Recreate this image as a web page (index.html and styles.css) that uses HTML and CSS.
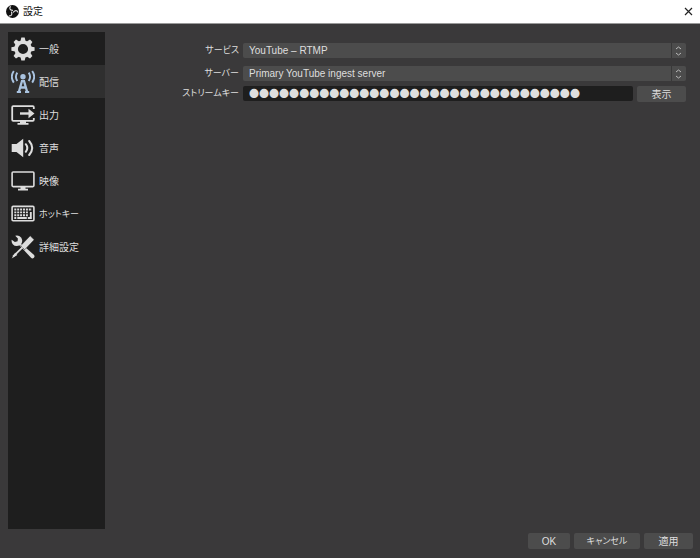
FILE: index.html
```html
<!DOCTYPE html>
<html lang="ja">

<head>
  <meta charset="UTF-8">
  <title>設定</title>
  <link rel="stylesheet" href="styles.css">
</head>

<body>
  <header class="titlebar">
    <svg class="logo" viewBox="0 0 24 24" aria-hidden="true">
      <circle cx="12" cy="12" r="12" fill="#111" />
      <g fill="none" stroke="#ddd" stroke-width="2.2" stroke-linecap="round">
        <path id="blade" d="M12 10C7 9 6 6 8 3" />
        <use href="#blade" transform="rotate(120 12 12)" />
        <use href="#blade" transform="rotate(240 12 12)" />
      </g>
    </svg>
    <h1>設定</h1>
    <button class="close" type="button" aria-label="閉じる">
      <svg viewBox="0 0 9 9"><path d="M1 1l7 7M8 1l-7 7" stroke="#222" stroke-width="1.2" /></svg>
    </button>
  </header>

  <div class="main">
    <nav class="sidebar">
      <a href="#general">
        <svg viewBox="0 0 24 24">
          <circle cx="12" cy="12" r="6.9" fill="none" stroke="#ddd" stroke-width="3.6" />
          <g fill="#ddd">
            <path id="tooth" d="M9.4 4.5L10.3.4h3.4l.9 4.1z" />
            <use href="#tooth" transform="rotate(45 12 12)" />
            <use href="#tooth" transform="rotate(90 12 12)" />
            <use href="#tooth" transform="rotate(135 12 12)" />
            <use href="#tooth" transform="rotate(180 12 12)" />
            <use href="#tooth" transform="rotate(225 12 12)" />
            <use href="#tooth" transform="rotate(270 12 12)" />
            <use href="#tooth" transform="rotate(315 12 12)" />
          </g>
        </svg>
        <span>一般</span>
      </a>
      <a href="#stream" class="active">
        <svg viewBox="0 0 24 24" fill="none" stroke="#a9c3e0">
          <circle cx="12" cy="6.8" r="2.7" fill="#a9c3e0" stroke="none" />
          <path d="M6.3 2.6Q3.5 6.8 6.3 11M17.7 2.6Q20.5 6.8 17.7 11M2.8 1Q-1.2 6.8 2.8 12.6M21.2 1Q25.2 6.8 21.2 12.6" stroke-width="1.9" />
          <path d="M11 11L7.8 22M13 11L16.2 22M9 17.5h6" stroke-width="2.3" />
          <path d="M10 11h4M5.8 22h4.2M14 22h4.2" stroke-width="2" />
        </svg>
        <span>配信</span>
      </a>
      <a href="#output">
        <svg viewBox="0 0 24 24" fill="none" stroke="#ddd">
          <path d="M22.8 6V4.2q0-1-1-1H2.2q-1 0-1 1v12.6q0 1 1 1h19.6q1 0 1-1V15" stroke-width="1.8" />
          <path d="M9 10.5h10" stroke-width="2.4" />
          <path d="M17.5 5.8l6 4.7-6 4.7z M9 18h6v2h2.5v1.8h-11V20H9z" fill="#ddd" stroke="none" />
        </svg>
        <span>出力</span>
      </a>
      <a href="#audio">
        <svg viewBox="0 0 24 24">
          <path d="M.7 8h4.8l6.7-5.3v18.6L5.5 16H.7z" fill="#ddd" />
          <path d="M14.8 8.2q3 3.8 0 7.6M18.2 5q6 7 0 14" fill="none" stroke="#ddd" stroke-width="2" stroke-linecap="round" />
        </svg>
        <span>音声</span>
      </a>
      <a href="#video">
        <svg viewBox="0 0 24 24">
          <rect x="1.1" y="3" width="21.8" height="14.6" rx="1" fill="none" stroke="#ddd" stroke-width="1.6" />
          <path d="M9.5 18h5v1.8h2.5v1.8H7v-1.8h2.5z" fill="#ddd" />
        </svg>
        <span>映像</span>
      </a>
      <a href="#hotkeys">
        <svg viewBox="0 0 24 24" fill="none" stroke="#ddd">
          <rect x="1.1" y="4.4" width="21.8" height="14.4" rx="1" stroke-width="1.6" />
          <path d="M3.3 7.5h17.6M3.3 10.4h14.5M3.3 13.2h14.5" stroke-width="1.9" stroke-dasharray="2 .9" />
          <path d="M3.3 16h2M6.3 16h9.5M16.8 16h4M19.8 10v5" stroke-width="1.9" />
        </svg>
        <span class="kana">ホットキー</span>
      </a>
      <a href="#advanced">
        <svg viewBox="0 0 24 24">
          <path d="M8.3 6.9L22.8 19.8a2 2 0 0 1-2.8 2.9L6.7 8.5z" fill="#ddd" />
          <path d="M4.2.8a5.3 5.3 0 1 1-3.5 4l3.2 2.3 2.7-.9.3-2.7z" fill="#ddd" />
          <path d="M19.2.8l4 3.9-9.5 10-4-4z" fill="#ddd" stroke="#1e1e1e" stroke-width=".5" />
          <path d="M11.5 12.3L2 21.6" stroke="#ddd" stroke-width="1.8" />
          <path d="M4.2 17.8L.6 23.4l5.7-3.5z" fill="#ddd" />
        </svg>
        <span>詳細設定</span>
      </a>
    </nav>

    <form class="settings" id="settings">
      <label for="service" class="kana">サービス</label>
      <div class="select">
        <select id="service">
          <option>YouTube – RTMP</option>
        </select>
        <svg viewBox="0 0 7 10"><path d="M1 3l2.5-2L6 3M1 7l2.5 2L6 7" /></svg>
      </div>

      <label for="server" class="kana">サーバー</label>
      <div class="select">
        <select id="server">
          <option>Primary YouTube ingest server</option>
        </select>
        <svg viewBox="0 0 7 10"><path d="M1 3l2.5-2L6 3M1 7l2.5 2L6 7" /></svg>
      </div>

      <label for="key" class="kana key-label">ストリームキー</label>
      <div class="key-row">
        <input type="password" id="key" value="000000000000000000000000000000000">
        <button type="button">表示</button>
      </div>
    </form>
  </div>

  <footer class="actions">
    <button type="submit" form="settings">OK</button>
    <button type="button" class="kana cancel">キャンセル</button>
    <button type="button" class="apply">適用</button>
  </footer>
</body>

</html>
```
FILE: styles.css
```css
* {
  box-sizing: border-box;
}

body {
  margin: 0;
  min-height: 100vh;
  display: flex;
  flex-direction: column;
  background: #3a393a;
  color: #dedede;
  font: 10px/15px "Liberation Sans", "Noto Sans CJK JP", sans-serif;
  font-feature-settings: "palt";
}

button,
input,
select {
  font: inherit;
  font-feature-settings: inherit;
  color: inherit;
  border: none;
  outline: none;
}

button {
  height: 16px;
  padding: 0;
  border-radius: 2px;
  background: #4c4c4c;
}

.kana {
  font-size: 9px;
}

.titlebar {
  display: flex;
  align-items: center;
  height: 24px;
  padding: 0 6px;
  background: #fff;
  border-bottom: 1px solid #999;
  color: #111;
}

.logo {
  width: 13px;
  height: 13px;
}

h1 {
  flex: 1;
  margin: 0 0 0 4px;
  font-size: 10px;
  font-weight: normal;
}

.close {
  width: 10px;
  background: none;
}

.close svg {
  display: block;
  width: 9px;
  height: 9px;
}

.main {
  flex: 1;
  display: flex;
  padding: 8px 14px 4px 8px;
}

.sidebar {
  width: 97px;
  background: #1e1e1e;
}

.sidebar a {
  display: flex;
  align-items: center;
  gap: 4px;
  height: 33px;
  padding: 0 3px;
  color: inherit;
  text-decoration: none;
}

.sidebar .active {
  background: #2f2f2f;
}

.sidebar svg {
  width: 24px;
  height: 24px;
}

.sidebar span {
  padding-top: 2px;
}

.settings {
  flex: 1;
  display: grid;
  grid-template-columns: 134px 1fr;
  grid-auto-rows: 15px;
  column-gap: 4px;
  row-gap: 8px;
  align-content: start;
  padding-top: 11px;
}

label {
  text-align: right;
}

.select {
  display: grid;
  align-items: center;
}

.select select,
.select svg {
  grid-area: 1 / 1;
}

select {
  appearance: none;
  width: 100%;
  height: 15px;
  padding: 0 6px;
  border-radius: 2px;
  background: linear-gradient(to left, #4c4c4c 14px, #383838 14px, #383838 15px, #4c4c4c 15px);
}

.select svg {
  justify-self: end;
  width: 7px;
  height: 10px;
  margin-right: 4px;
  fill: none;
  stroke: #bbb;
  pointer-events: none;
}

.key-label,
.key-row {
  margin-top: -3px;
}

.key-row {
  display: flex;
  gap: 4px;
}

.key-row input {
  flex: 1;
  min-width: 0;
  height: 15px;
  padding: 0 6px;
  border-radius: 2px;
  background: #1e1e1e;
  font-family: "DejaVu Sans", sans-serif;
  font-size: 17px;
  line-height: 15px;
  -webkit-text-stroke: 4px #dedede;
}

.key-row button {
  width: 49px;
}

.actions {
  display: flex;
  justify-content: flex-end;
  gap: 4px;
  padding: 0 7px 9px;
}

.actions button {
  width: 42px;
}

.actions .cancel {
  width: 66px;
}

.actions .apply {
  width: 49px;
}
```
